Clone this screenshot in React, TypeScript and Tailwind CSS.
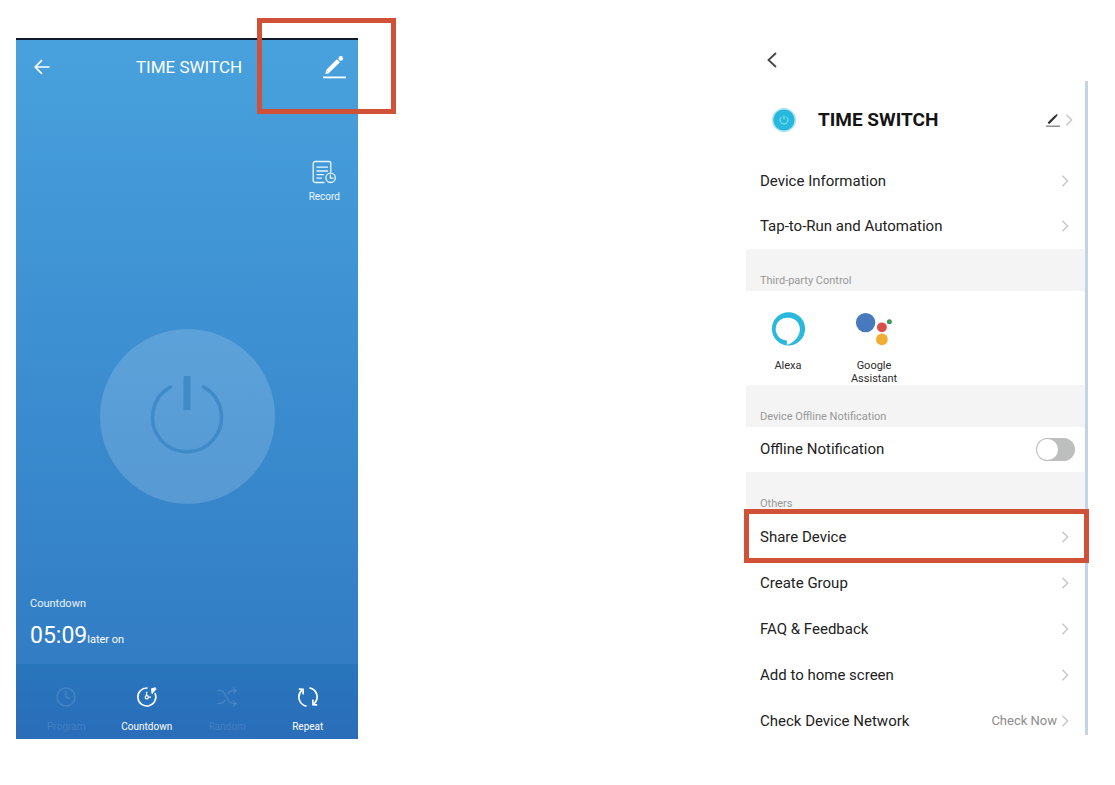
import type { ReactNode } from "react";

function Chevron() {
  return (
    <svg viewBox="0 0 8 14" className="h-3 w-2 shrink-0" fill="none" stroke="#c8c8c8" strokeWidth="1.7" aria-hidden="true">
      <path d="M1 1l6 6-6 6" />
    </svg>
  );
}

function PencilIcon({ className }: { className: string }) {
  return (
    <svg viewBox="0 0 24 24" className={className} fill="none" stroke="currentColor" aria-hidden="true">
      <path d="M5.6 16.6L16.4 5.8" strokeWidth="4.2" />
      <path d="M3.3 19l.8-4 3.2 3.2z" fill="currentColor" stroke="none" />
      <circle cx="18.8" cy="3.4" r="2.3" fill="currentColor" stroke="none" />
      <path d="M17.3 4.9l1.5-1.5" strokeWidth="2.6" />
      <path d="M1 22.4h23" strokeWidth="1.8" />
    </svg>
  );
}

function RecordIcon() {
  return (
    <svg viewBox="0 0 24 24" className="size-6" fill="none" stroke="currentColor" strokeWidth="1.3" strokeLinecap="round" aria-hidden="true">
      <path d="M12 22.5H3.2a2 2 0 0 1-2-2v-17a2 2 0 0 1 2-2h13.6a2 2 0 0 1 2 2V12" />
      <path d="M5 7.2h10.5M5 11h10.5M5 14.6h6.5M5 18.2h4.5" />
      <circle cx="18.6" cy="17.8" r="4.7" />
      <path d="M18.4 15.2v2.9h2.6" />
    </svg>
  );
}

function ProgramIcon() {
  return (
    <svg viewBox="0 0 22 22" className="size-[22px]" fill="none" stroke="currentColor" strokeWidth="1.5" aria-hidden="true">
      <circle cx="11" cy="11" r="9" />
      <path d="M11 5.5V11l4 1.5" />
    </svg>
  );
}

function CountdownIcon() {
  return (
    <svg viewBox="0 0 22 22" className="size-[22px]" fill="none" stroke="currentColor" strokeWidth="1.6" aria-hidden="true">
      <path d="M11.5 2A9 9 0 1 0 19 7.2" />
      <path d="M15 2.8h5.8L16.2 8z" fill="currentColor" stroke="none" />
      <path d="M19.8 2l-3.6.9v4.6" />
      <path d="M10.6 5.8v4M12.4 11.2H15" strokeWidth="1.3" />
      <circle cx="10.8" cy="11.2" r="1.6" strokeWidth="1.2" />
    </svg>
  );
}

function RandomIcon() {
  return (
    <svg viewBox="0 0 22 22" className="size-[22px]" fill="none" stroke="currentColor" strokeWidth="1.5" aria-hidden="true">
      <path d="M1.5 4.5h3c6 0 6 13 12 13h3M1.5 17.5h3c2.2 0 3.6-1.6 4.7-3.6M11.8 8.1c1.1-2 2.5-3.6 4.7-3.6h3" />
      <path d="M17 1.5l3 3-3 3M17 14.5l3 3-3 3" />
    </svg>
  );
}

function RepeatIcon() {
  return (
    <svg viewBox="0 0 22 22" className="size-[22px]" fill="none" stroke="currentColor" strokeWidth="1.7" aria-hidden="true">
      <path d="M9.5 20.2C1.5 18.6-.5 9 5 4.2M12.5 1.8C20.5 3.4 22.5 13 17 17.8" />
      <path d="M1.8 3.2l4.2.2.2 5M20.2 18.8l-4.2-.2-.2-5" />
    </svg>
  );
}

function Highlight({ className }: { className: string }) {
  return <span aria-hidden="true" className={`pointer-events-none absolute z-10 border-5 border-[#d05138] ${className}`} />;
}

function Mode({ label, icon, disabled }: { label: string; icon: ReactNode; disabled?: boolean }) {
  return (
    <button type="button" disabled={disabled} className="flex flex-1 flex-col items-center gap-[11px] disabled:text-white/12">
      {icon}
      <span className="text-[10px] leading-4">{label}</span>
    </button>
  );
}

function SwitchScreen() {
  return (
    <section className="flex max-w-[342px] min-w-0 flex-1 flex-col border-t-2 border-[#10182c] bg-linear-to-b from-[#48a1dc] via-[#3b8dd0] to-[#3078c0] text-white">
      <header className="flex h-[54px] items-center justify-between pr-3 pl-4">
        <button type="button" aria-label="Back" className="flex size-5 items-center justify-center">
          <svg viewBox="0 0 16 16" className="size-4" fill="none" stroke="currentColor" strokeWidth="1.7" aria-hidden="true">
            <path d="M15.5 8H1.5M8 1.2L1.2 8 8 14.8" />
          </svg>
        </button>
        <h1 className="pl-1 text-[17px] leading-6">TIME SWITCH</h1>
        <button type="button" aria-label="Edit" className="relative">
          <PencilIcon className="size-6" />
          <Highlight className="-top-[37px] -right-[50px] h-[96px] w-[139px]" />
        </button>
      </header>
      <button type="button" className="mt-[66px] mr-[18px] flex flex-col items-center gap-[5px] self-end text-white/90">
        <RecordIcon />
        <span className="text-[10px] leading-4">Record</span>
      </button>
      <button type="button" aria-label="Power" className="mt-[124px] flex size-[175px] items-center justify-center self-center rounded-full bg-white/16">
        <svg viewBox="0 4 76 82" className="h-[82px] w-[76px]" fill="none" stroke="#408ac7" strokeLinecap="round" aria-hidden="true">
          <path d="M21.5 15A34.5 34.5 0 1 0 54.5 15" strokeWidth="3.5" />
          <path d="M34.5 6a3.5 3.5 0 0 1 7 0v32h-7z" fill="#408ac7" stroke="none" />
        </svg>
      </button>
      <div className="mt-[92px] px-3.5 pb-2">
        <p className="text-[11px] leading-4 text-white/90">Countdown</p>
        <p className="mt-2 text-[11px] leading-8">
          <span className="text-[23px]">05:09</span>later on
        </p>
      </div>
      <nav className="flex bg-linear-to-b from-[#2876bc] to-[#2a6dba] px-2.5 pt-[22px] pb-1">
        <Mode label="Program" icon={<ProgramIcon />} disabled />
        <Mode label="Countdown" icon={<CountdownIcon />} />
        <Mode label="Random" icon={<RandomIcon />} disabled />
        <Mode label="Repeat" icon={<RepeatIcon />} />
      </nav>
    </section>
  );
}

function SectionLabel({ children }: { children: ReactNode }) {
  return <h3 className="bg-[#f4f4f4] px-3.5 pt-6 pb-0.5 text-[11px] leading-4 text-[#979797]">{children}</h3>;
}

function Row({ label, value, marked }: { label: string; value?: string; marked?: boolean }) {
  return (
    <li className="relative flex">
      <a href="#" className="flex flex-1 items-center gap-1 pr-4 pl-3.5 text-[15px] text-[#222]">
        <span className="flex-1">{label}</span>
        {value && <span className="text-[13px] text-[#8c8c8c]">{value}</span>}
        <Chevron />
      </a>
      {marked && <Highlight className="-top-[5px] -right-1 -bottom-[3px] -left-0.5" />}
    </li>
  );
}

function SettingsScreen() {
  return (
    <section className="flex max-w-[342px] min-w-0 flex-1 flex-col">
      <header className="flex h-[43px] items-center px-4">
        <button type="button" aria-label="Back" className="flex size-5 items-center justify-center">
          <svg viewBox="0 0 10 16" className="h-4 w-2.5" fill="none" stroke="#444" strokeWidth="1.8" aria-hidden="true">
            <path d="M9 1L1.5 8 9 15" />
          </svg>
        </button>
      </header>
      <div className="border-r-3 border-[#c2d4e6]">
        <div className="flex h-[77px] items-center pr-3 pl-[26px]">
          <svg viewBox="0 0 24 24" className="size-6" fill="none" aria-hidden="true">
            <circle cx="12" cy="12" r="12" fill="#b5e3f1" />
            <circle cx="12" cy="12" r="10.6" fill="#25b9dd" />
            <path d="M9.8 8.7a4 4 0 1 0 4.4 0M12 7.5v4" stroke="#9fe3f4" strokeWidth="1" />
          </svg>
          <h2 className="flex-1 pl-[22px] text-[19px] leading-6 font-bold text-[#151515]">TIME SWITCH</h2>
          <button type="button" aria-label="Rename device" className="flex items-center gap-[5px]">
            <svg viewBox="0 0 14 14" className="size-3.5" fill="none" aria-hidden="true">
              <path d="M2.4 10.4L10 2.8" stroke="#333" strokeWidth="2.2" />
              <path d="M10 2.8l1.3-1.3" stroke="#333" strokeWidth="1.6" />
              <path d="M0 13.2h14" stroke="#777" strokeWidth="1.2" />
            </svg>
            <Chevron />
          </button>
        </div>
        <ul className="grid h-[91px] auto-rows-fr">
          <Row label="Device Information" />
          <Row label="Tap-to-Run and Automation" />
        </ul>
        <SectionLabel>Third-party Control</SectionLabel>
        <div className="flex h-[94px] px-2 pt-5 text-center text-[11px] leading-[13px] text-[#2c2c2c]">
          <a href="#" className="flex w-[68px] flex-col items-center gap-3">
            <svg viewBox="0 0 36 36" className="size-9" aria-hidden="true">
              <path
                fill="#2bb8de"
                fillRule="evenodd"
                d="M18.5 1.2a16.6 16.6 0 1 0 0 33.2 16.6 16.6 0 1 0 0-33.2zM18.5 6.8c6.4 0 11.4 5 11.4 11.3 0 7-5 12.9-11.9 15.5-.7.3-1.3-.1-1.2-.8l.2-1.4c.1-1.2-.4-1.7-1.4-2.1A11.3 11.3 0 0 1 18.5 6.8z"
              />
            </svg>
            Alexa
          </a>
          <a href="#" className="ml-[18px] flex w-[68px] flex-col items-center gap-3">
            <svg viewBox="0 0 36 36" className="size-9 overflow-visible" aria-hidden="true">
              <circle cx="9.6" cy="11.6" r="9.7" fill="#4779bf" />
              <circle cx="25.9" cy="16.3" r="4.9" fill="#dc4d47" />
              <circle cx="33.4" cy="10.8" r="2.5" fill="#3d9a5f" />
              <circle cx="25.9" cy="28.4" r="5.9" fill="#f3ad35" />
            </svg>
            <span>
              Google
              <br />
              Assistant
            </span>
          </a>
        </div>
        <SectionLabel>Device Offline Notification</SectionLabel>
        <label className="flex h-[45px] items-center justify-between pr-2.5 pl-3.5 text-[15px] text-[#222]">
          Offline Notification
          <input
            type="checkbox"
            role="switch"
            className="flex h-[23px] w-[39px] appearance-none items-center rounded-full bg-[#bcbfbe] p-px before:size-[21px] before:rounded-full before:bg-white checked:justify-end checked:bg-[#25b9dd]"
          />
        </label>
        <SectionLabel>Others</SectionLabel>
        <ul className="-mb-[9px] grid h-[230px] auto-rows-fr">
          <Row label="Share Device" marked />
          <Row label="Create Group" />
          <Row label="FAQ &amp; Feedback" />
          <Row label="Add to home screen" />
          <Row label="Check Device Network" value="Check Now" />
        </ul>
      </div>
    </section>
  );
}

export default function App() {
  return (
    <main className="flex min-h-screen items-start justify-between gap-8 bg-white pt-[38px] pr-[27px] pb-10 pl-4 font-[Roboto,sans-serif]">
      <SwitchScreen />
      <SettingsScreen />
    </main>
  );
}
